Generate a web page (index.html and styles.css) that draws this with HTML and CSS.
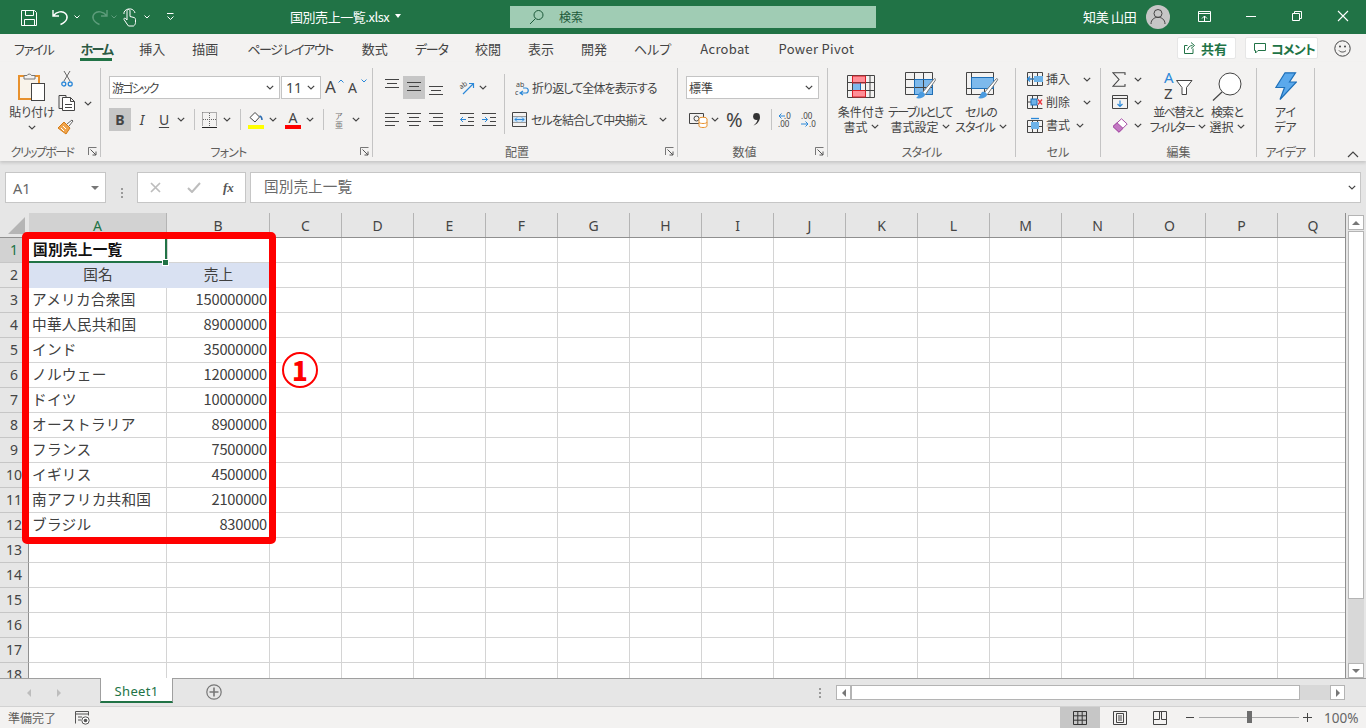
FILE: index.html
```html
<!DOCTYPE html>
<html lang="ja">
<head>
<meta charset="utf-8">
<title>国別売上一覧.xlsx - Excel</title>
<link rel="stylesheet" href="styles.css">
</head>
<body>
<svg class="defs" width="0" height="0" aria-hidden="true">
  <symbol id="chev" viewBox="0 0 8 5"><path d="M.8.8 4 4 7.2.8" fill="none" stroke="#444" stroke-width="1.2"/></symbol>
  <symbol id="launch" viewBox="0 0 9 9"><path d="M.5 8V.5H8.5M1 .5V1" fill="none" stroke="#777"/><path d="M2.5 2.5 8 8M8 4.5V8H4.5" fill="none" stroke="#555"/></symbol>
  <symbol id="al-top" viewBox="0 0 14 17"><path d="M0 .5h14M2 4.500h10M0 8.500h14" stroke="#444"/></symbol>
  <symbol id="al-mid" viewBox="0 0 14 17"><path d="M0 3.500h14M2 7.500h10M0 11.500h14" stroke="#444"/></symbol>
  <symbol id="al-bot" viewBox="0 0 14 17"><path d="M0 7.500h14M2 11.500h10M0 15.500h14" stroke="#444"/></symbol>
  <symbol id="h-left" viewBox="0 0 14 15"><path d="M0 1.500h14M0 5.500h10M0 9.500h14M0 13.500h10" stroke="#444"/></symbol>
  <symbol id="h-center" viewBox="0 0 14 15"><path d="M0 1.500h14M2 5.500h10M0 9.500h14M2 13.500h10" stroke="#444"/></symbol>
  <symbol id="h-right" viewBox="0 0 14 15"><path d="M0 1.500h14M4 5.500h10M0 9.500h14M4 13.500h10" stroke="#444"/></symbol>
</svg>

<header class="titlebar">
  <svg class="qat" width="180" height="34" viewBox="0 0 180 34">
    <g fill="none" stroke="#fff">
      <path d="M21.5 10.5h13l2 2v13h-15zM25.5 10.5v5h8v-5M24.5 25.5v-6h10v6"/>
      <path d="M53 10v6h6M53.5 15.5c3-4 9-5 12-2 3 3 2 8-5 11" stroke-width="1.4"/>
      <path d="M74.500 15.500l2.500 2.500 2.500-2.500"/>
      <g stroke="#5d9c7b"><path d="M107 10v6h-6M106.500 15.500c-3-4-9-5-12-2-3 3-2 8 5 11" stroke-width="1.400"/><path d="M111.500 15.500l2.500 2.500 2.500-2.500"/></g>
      <path d="M127 24l-3-4.500c-.5-1 .8-2 1.600-1l1.400 1.500v-9c0-2 3-2 3 0v5.500l4 1c1 .3 1.500 1 1.500 2v3c0 1.500-1 3-2 3.500h-5z"/>
      <path d="M124 14c-1-5 9-8 11-1"/>
      <path d="M144.500 15.500l2.500 2.500 2.500-2.500"/>
      <path d="M167 13.500h6.500M167.500 16.500l3 3 3-3"/>
    </g>
  </svg>
  <div class="doc"><span>国別売上一覧.xlsx</span><span class="doc-caret"></span></div>
  <div class="search">
    <svg width="16" height="16" viewBox="0 0 16 16"><circle cx="9.500" cy="6" r="4.500" fill="none" stroke="#1d5a3a"/><path d="M6.500 9.500 1 15" stroke="#1d5a3a"/></svg>
    <span>検索</span>
  </div>
  <span class="user">知美 山田</span>
  <span class="avatar"><svg width="24" height="24" viewBox="0 0 24 24"><circle cx="12" cy="8.500" r="4" fill="none" stroke="#444"/><path d="M5 19c0-9 14-9 14 0" fill="none" stroke="#444"/></svg></span>
  <svg class="winctl" width="196" height="34" viewBox="0 0 196 34">
    <g fill="none" stroke="#fff">
      <path d="M28.500 11.500h12v10h-12zM28.500 13.500h12M32 18.500l2.500-2.500 2.500 2.500M34.500 16v5"/>
      <path d="M76 16.500h10"/>
      <path d="M122.500 13.500h7v7h-7zM124.500 13.500v-2h7v7h-2"/>
      <path d="M168 11l10 10M178 11l-10 10" stroke-width="1.100"/>
    </g>
  </svg>
</header>

<nav class="tabs">
  <span class="tab kana">ファイル</span>
  <span class="tab active kana">ホーム</span>
  <span class="tab">挿入</span>
  <span class="tab">描画</span>
  <span class="tab kana wide">ページ レイアウト</span>
  <span class="tab wide">数式</span>
  <span class="tab kana data">データ</span>
  <span class="tab">校閲</span>
  <span class="tab">表示</span>
  <span class="tab">開発</span>
  <span class="tab">ヘルプ</span>
  <span class="tab latin wide">Acrobat</span>
  <span class="tab latin wide">Power Pivot</span>
  <span class="tabs-right">
    <span class="pill pill-share">
      <svg width="12" height="12" viewBox="0 0 12 12"><path d="M9 6.500v5H.5V3.500h3M3.500 8c.5-3 2.500-4.500 5-4.500M7 .5l3.500 3L7 6.500" fill="none" stroke="#217346"/></svg>
      共有
    </span>
    <span class="pill pill-comment">
      <svg width="12" height="12" viewBox="0 0 12 12"><path d="M.5 1.500h11v7H4l-2.500 2.500V8.500h-1z" fill="none" stroke="#217346"/></svg>
      <span class="tight">コメント</span>
    </span>
    <svg class="smile" width="17" height="17" viewBox="0 0 17 17"><circle cx="8.500" cy="8.500" r="7.700" fill="none" stroke="#444"/><circle cx="6" cy="6.500" r="1" fill="#444"/><circle cx="11" cy="6.500" r="1" fill="#444"/><path d="M5 10.500c1.500 2 5.500 2 7 0" fill="none" stroke="#444"/></svg>
  </span>
</nav>

<section class="ribbon">
  <div class="group g-clip">
    <div class="body row-body">
      <div class="big w56">
        <span class="bigicon"><svg width="28" height="31" viewBox="0 0 28 31">
          <rect x="1" y="5" width="20" height="23" fill="#f9f3ea" stroke="#e8912d" stroke-width="2"/>
          <path d="M6 8V4.500h3a2.500 2.500 0 0 1 4.500 0H17V8z" fill="#f3f2f1" stroke="#777"/>
          <rect x="13.500" y="12.500" width="13" height="17" fill="#fff" stroke="#444"/>
        </svg></span>
        <span class="biglabel">貼り付け</span>
        <svg class="chev chev-c"><use href="#chev"/></svg>
      </div>
      <div class="clip-tools">
        <svg class="cut" width="12" height="16" viewBox="0 0 12 16"><path d="M3 10 9 0M9 10 3 0" stroke="#666"/><circle cx="2.800" cy="13" r="2" fill="none" stroke="#2b88d8" stroke-width="1.300"/><circle cx="9.200" cy="13" r="2" fill="none" stroke="#2b88d8" stroke-width="1.300"/></svg>
        <span class="copyrow"><svg width="18" height="16" viewBox="0 0 18 16"><path d="M8 2.500V.5H1v13h3" fill="none" stroke="#444"/><path d="M4.500 2.500h8l4 4v9h-12zM12.500 2.500v4h4M7 9.500h7M7 12.500h7" fill="#fff" stroke="#444"/></svg><svg class="chev ml8"><use href="#chev"/></svg></span>
        <svg width="16" height="16" viewBox="0 0 16 16"><path d="M9 5 14 1l1 1-4 5" fill="#fff" stroke="#666"/><path d="M6 3 12 9 8 15 0 9z" fill="#f0a44b" stroke="#d47a14"/><path d="M3 9l3 3M5 7l3 3" stroke="#fff"/></svg>
      </div>
    </div>
    <div class="glabel launched tighter">クリップボード</div>
    <svg class="launch"><use href="#launch"/></svg>
  </div>

  <div class="group g-font">
    <div class="body">
      <div class="toolrow">
        <span class="select w171"><span class="fontname">游ゴシック</span><svg class="chev"><use href="#chev"/></svg></span>
        <span class="select w40 ml1"><span class="sz">11</span><svg class="chev"><use href="#chev"/></svg></span>
        <span class="fontsize ml4 w16">A<svg class="up" width="6" height="4" viewBox="0 0 6 4"><path d="M.5 3.500 3 1l2.500 2.500" fill="none" stroke="#2b88d8"/></svg></span>
        <span class="fontsize small ml7 w16">A<svg class="up" width="6" height="4" viewBox="0 0 6 4"><path d="M.5.500 3 3l2.500-2.500" fill="none" stroke="#2b88d8"/></svg></span>
      </div>
      <div class="toolrow">
        <span class="btn on b">B</span>
        <span class="btn i">I</span>
        <span class="btn u">U</span>
        <svg class="chev ml2"><use href="#chev"/></svg>
        <span class="sep ml9"></span>
        <svg class="ml7" width="15" height="16" viewBox="0 0 15 16"><path d="M.5.500h14v14M.5.500v14M7.500 1v14M1 7.500h14" fill="none" stroke="#666" stroke-dasharray="1 1"/><path d="M0 15.500h15" stroke="#222"/></svg>
        <svg class="chev ml6"><use href="#chev"/></svg>
        <span class="sep ml9"></span>
        <svg class="ml7" width="16" height="18" viewBox="0 0 16 18"><path d="M2 6.500 7 1.500l4.500 4.500-4.500 5z" fill="#fff" stroke="#444"/><path d="M11.500 5c2 .5 2.500 2 2.500 4" fill="none" stroke="#2b6cb0" stroke-width="1.500"/><rect y="14" width="16" height="4" fill="#ffff00"/></svg>
        <svg class="chev ml5"><use href="#chev"/></svg>
        <span class="colora ml8">A</span>
        <svg class="chev ml5"><use href="#chev"/></svg>
        <span class="sep ml9"></span>
        <span class="ruby ml11"><span>ア</span><span>亜</span></span>
        <svg class="chev ml7"><use href="#chev"/></svg>
      </div>
    </div>
    <div class="glabel launched tight">フォント</div>
    <svg class="launch"><use href="#launch"/></svg>
  </div>

  <div class="group g-align">
    <div class="body">
      <div class="toolrow">
        <svg class="ialign"><use href="#al-top"/></svg>
        <span class="btn on ml4"><svg class="ialign"><use href="#al-mid"/></svg></span>
        <svg class="ialign ml4"><use href="#al-bot"/></svg>
        <svg class="ml16 free" width="16" height="16" viewBox="0 0 16 16"><text x="1" y="8" class="tiny" transform="rotate(-35 4 7)">ab</text><path d="M4 14 14 4M10 3.500h4.500V8" fill="none" stroke="#2b88d8" stroke-width="1.200"/></svg>
        <svg class="chev ml4"><use href="#chev"/></svg>
        <span class="sep tall ml17"></span>
        <svg class="ml10" width="14" height="16" viewBox="0 0 14 16"><text x="1" y="7" class="tiny">ab</text><text x="0" y="15" class="tiny">c</text><path d="M6 13h5c3 0 3-5 0-5H8M8 11l-3 2 3 2" fill="none" stroke="#2b88d8" stroke-width="1.200"/></svg>
        <span class="label ml3">折り返して全体を表示する</span>
      </div>
      <div class="toolrow">
        <svg class="i14"><use href="#h-left"/></svg>
        <svg class="i14 ml8"><use href="#h-center"/></svg>
        <svg class="i14 ml8"><use href="#h-right"/></svg>
        <svg class="ml17" width="14" height="15" viewBox="0 0 14 15"><path d="M0 1.500h14M8 5.500h6M8 9.500h6M0 13.500h14" stroke="#444"/><path d="M6 7.500H.5M3 5l-2.500 2.500L3 10" fill="none" stroke="#2b88d8"/></svg>
        <svg class="ml8" width="14" height="15" viewBox="0 0 14 15"><path d="M0 1.500h14M8 5.500h6M8 9.500h6M0 13.500h14" stroke="#444"/><path d="M0 7.500h5.500M3 5l2.500 2.500L3 10" fill="none" stroke="#2b88d8"/></svg>
        <span class="sep sep-gap ml8"></span>
        <svg class="ml7" width="15" height="15" viewBox="0 0 15 15"><path d="M.5.500h14v14H.5zM1 5h13M1 10h13" fill="none" stroke="#444"/><rect x="1" y="5" width="13" height="5" fill="#cfe4f6"/><path d="M3 7.500h9M5 5.500l-2 2 2 2M10 5.500l2 2-2 2" fill="none" stroke="#2b88d8"/></svg>
        <span class="label ml4">セルを結合して中央揃え</span>
        <svg class="chev ml12"><use href="#chev"/></svg>
      </div>
    </div>
    <div class="glabel launched">配置</div>
    <svg class="launch"><use href="#launch"/></svg>
  </div>

  <div class="group g-num">
    <div class="body">
      <div class="toolrow">
        <span class="select w133"><span>標準</span><svg class="chev"><use href="#chev"/></svg></span>
      </div>
      <div class="toolrow">
        <svg class="ml3" width="19" height="17" viewBox="0 0 19 17"><path d="M.500 2.500h14v10H.500z" fill="none" stroke="#444"/><circle cx="7.500" cy="7.500" r="2.500" fill="none" stroke="#444"/><ellipse cx="14" cy="8" rx="4" ry="1.800" fill="#fff" stroke="#e8912d"/><path d="M10 8v7c0 2 8 2 8 0V8M10 11c0 2 8 2 8 0" fill="#fff" stroke="#e8912d"/></svg>
        <svg class="chev ml3"><use href="#chev"/></svg>
        <span class="pct ml7">%</span>
        <svg class="ml10" width="9" height="13" viewBox="0 0 9 13"><circle cx="4.500" cy="3.500" r="3.400" fill="#333"/><path d="M7.900 3.500C8.200 8 5 11.500 1.500 12.500 4 10.500 5.500 8.500 5.500 6z" fill="#333"/></svg>
        <span class="sep ml10"></span>
        <svg class="ml6" width="18" height="16" viewBox="0 0 18 16"><text x="6" y="7" class="num">.0</text><text x="0" y="15" class="num">.00</text><path d="M7 4H1M3.500 1.500 1 4l2.500 2.500" fill="none" stroke="#2b88d8"/></svg>
        <svg class="ml5" width="17" height="16" viewBox="0 0 17 16"><text x="0" y="7" class="num">.00</text><text x="8" y="15" class="num">.0</text><path d="M0 12h7M4.500 9.500 7 12l-2.500 2.500" fill="none" stroke="#2b88d8"/></svg>
      </div>
    </div>
    <div class="glabel launched">数値</div>
    <svg class="launch"><use href="#launch"/></svg>
  </div>

  <div class="group g-style">
    <div class="body row-body">
      <div class="big w54">
        <span class="bigicon"><svg width="28" height="23" viewBox="0 0 28 23">
          <rect x="5" y="1" width="13" height="7" fill="#ff8f97"/><rect x="5" y="15" width="13" height="7" fill="#ff8f97"/><rect x="5" y="8" width="8" height="7" fill="#7db9ec"/>
          <path d="M.5.500h27v22H.5zM.5 7.500h27M.5 15.500h27M5.500 1v21M18.500 1v21M23 1v21" fill="none" stroke="#444"/>
          <path d="M5.500 1h13v7h-13zM5.500 15.500h13v6.500h-13z" fill="none" stroke="#d81e26"/><path d="M13.500 8v7" stroke="#1d6fb8"/>
        </svg></span>
        <span class="biglabel">条件付き</span>
        <span class="biglabel">書式<svg class="chev ml3"><use href="#chev"/></svg></span>
      </div>
      <div class="big w64">
        <span class="bigicon"><svg width="31" height="28" viewBox="0 0 31 28">
          <rect x="9" y="7" width="19" height="15" fill="#7db9ec"/>
          <path d="M.5.500h27v22H.5zM.5 7.500h27M.5 15.500h27M9.500 1v21M18.500 1v21" fill="none" stroke="#444"/>
          <path d="M9.500 7.500h18v15h-18z" fill="none" stroke="#1d6fb8"/>
          <path d="M17 21 29 7c1-1 2 0 1.500 1L20 23z" fill="#fff" stroke="#777"/><path d="M15 20c3-1 5 1 5 3-1 3-6 4-9 3 2-1 2-4 4-6z" fill="#4a9be0"/>
        </svg></span>
        <span class="biglabel tighter">テーブルとして</span>
        <span class="biglabel">書式設定<svg class="chev ml3"><use href="#chev"/></svg></span>
      </div>
      <div class="big w58">
        <span class="bigicon"><svg class="shift" width="34" height="28" viewBox="0 0 34 28">
          <rect x="5" y="5" width="23" height="11" fill="#7db9ec"/>
          <path d="M.5.500h27v22H.5zM5.500 1v21M.5 16.500h27M18.500 16v6" fill="none" stroke="#444"/>
          <path d="M5.500 5.500h22v11h-22z" fill="none" stroke="#1d6fb8"/>
          <path d="M18 21 30 7c1-1 2 0 1.500 1L21 23z" fill="#fff" stroke="#777"/><path d="M16 20c3-1 5 1 5 3-1 3-6 4-9 3 2-1 2-4 4-6z" fill="#4a9be0"/>
        </svg></span>
        <span class="biglabel tight">セルの</span>
        <span class="biglabel tight">スタイル<svg class="chev ml4"><use href="#chev"/></svg></span>
      </div>
    </div>
    <div class="glabel tight">スタイル</div>
  </div>

  <div class="group g-cell">
    <div class="body stack">
      <span class="cellrow"><svg width="16" height="14" viewBox="0 0 16 14"><path d="M.5.500h15v13H.5zM5.500 1v12M10.500 1v12M1 7h14" fill="none" stroke="#444"/><rect x="7" y="4" width="9" height="6" fill="#6db2e8"/><path d="M0 7h7M3 4.500.5 7 3 9.500" fill="none" stroke="#2b88d8" stroke-width="1.200"/></svg><span class="label w24">挿入</span><svg class="chev ml13"><use href="#chev"/></svg></span>
      <span class="cellrow"><svg width="16" height="14" viewBox="0 0 16 14"><path d="M.500 .500h15M.500 13.500h15M.500 .500v13M5.500 1v3M5.500 10v3M10.500 1v3M10.500 10v3M1 7h3" fill="none" stroke="#444"/><rect x="4" y="4" width="6" height="6" fill="#6db2e8" stroke="#1d6fb8"/><path d="M11 4.500 15 9.500M15 4.500l-4 5" stroke="#e8353e" stroke-width="1.300"/></svg><span class="label w24">削除</span><svg class="chev ml13"><use href="#chev"/></svg></span>
      <span class="cellrow"><svg width="16" height="16" viewBox="0 0 16 16"><path d="M.500 3.500h15v12H.500zM1 9.500h14M5.500 4v11M10.500 4v11" fill="none" stroke="#444"/><rect x="4" y="5" width="8" height="7" fill="#6db2e8"/><path d="M4 1.500h8" stroke="#2b88d8" stroke-width="1.300"/></svg><span class="label w24">書式</span><svg class="chev ml6"><use href="#chev"/></svg></span>
    </div>
    <div class="glabel">セル</div>
  </div>

  <div class="group g-edit">
    <div class="body row-body">
      <div class="stack w37">
        <span class="cellrow"><svg width="14" height="15" viewBox="0 0 14 15"><path d="M13 3V.8H1L7 7.500 1 14.200h12V12" fill="none" stroke="#444" stroke-width="1.100"/></svg><svg class="chev ml8"><use href="#chev"/></svg></span>
        <span class="cellrow"><svg width="16" height="14" viewBox="0 0 16 14"><path d="M.500 .500h15v13H.500zM1 3.500h14" fill="none" stroke="#444"/><path d="M8 5.500v6M5.500 9 8 11.500 10.500 9" fill="none" stroke="#2b88d8" stroke-width="1.200"/></svg><svg class="chev ml6"><use href="#chev"/></svg></span>
        <span class="cellrow"><svg width="16" height="15" viewBox="0 0 16 15"><path d="M9.500.8 15.200 6 7 14.200 1 8.500z" fill="#fff" stroke="#a54da5"/><path d="M1 8.500 5 4.800l6 5.500L7 14.200z" fill="#c278c2" stroke="#a54da5"/></svg><svg class="chev ml6"><use href="#chev"/></svg></span>
      </div>
      <div class="big w58">
        <span class="bigicon"><svg width="30" height="28" viewBox="0 0 30 28"><text x="1" y="11" class="az blue">A</text><text x="1" y="27" class="az">Z</text><path d="M13.500 8.500h15.500L23.500 15.500v7h-4.500v-7z" fill="#fff" stroke="#444"/></svg></span>
        <span class="biglabel tighter">並べ替えと</span>
        <span class="biglabel tighter">フィルター<svg class="chev ml4"><use href="#chev"/></svg></span>
      </div>
      <div class="big w40">
        <span class="bigicon"><svg width="30" height="29" viewBox="0 0 30 29"><circle cx="18" cy="12" r="11" fill="#fff" stroke="#444"/><path d="M10 20 1 28.500" stroke="#444" stroke-width="1.200"/></svg></span>
        <span class="biglabel tight">検索と</span>
        <span class="biglabel">選択<svg class="chev ml3"><use href="#chev"/></svg></span>
      </div>
    </div>
    <div class="glabel">編集</div>
  </div>

  <div class="group g-idea">
    <div class="body row-body">
      <div class="big w57">
        <span class="bigicon"><svg width="22" height="28" viewBox="0 0 22 28"><path d="M10 .8h10.500L14.500 10h7L5 27.500 9.500 15.500H.8z" fill="#5ba9ec" stroke="#1d6fb8" stroke-width="1.200"/></svg></span>
        <span class="biglabel">アイ</span>
        <span class="biglabel">デア</span>
      </div>
    </div>
    <div class="glabel tight">アイデア</div>
  </div>

  <svg class="collapse" width="12" height="7" viewBox="0 0 12 7"><path d="M1 6 6 1l5 5" fill="none" stroke="#444" stroke-width="1.200"/></svg>
</section>

<section class="formula">
  <div class="namebox"><span>A1</span><span class="caret"></span></div>
  <div class="dots"><i></i><i></i><i></i></div>
  <div class="fxbtns">
    <svg width="11" height="11" viewBox="0 0 11 11"><path d="M1 1l9 9M10 1l-9 9" stroke="#bdbdbd" stroke-width="1.700"/></svg>
    <svg width="14" height="11" viewBox="0 0 14 11"><path d="M1 6l4 4 8-9" fill="none" stroke="#bdbdbd" stroke-width="2"/></svg>
    <span class="fx">fx</span>
  </div>
  <div class="fxinput"><span class="fxtext">国別売上一覧</span><svg class="chev"><use href="#chev"/></svg></div>
</section>

<main class="workarea">
  <div class="grid">
    <div class="colhead">
      <span class="corner"><svg width="17" height="17" viewBox="0 0 17 17"><path d="M17 0v17H0z" fill="#b5b5b5"/></svg></span>
      <span class="ch col-a active">A</span>
      <span class="ch col-b">B</span>
      <span class="ch">C</span><span class="ch">D</span><span class="ch">E</span><span class="ch">F</span><span class="ch">G</span><span class="ch">H</span><span class="ch">I</span><span class="ch">J</span><span class="ch">K</span><span class="ch">L</span><span class="ch">M</span><span class="ch">N</span><span class="ch">O</span><span class="ch">P</span><span class="ch last">Q</span>
    </div>
    <div class="row"><span class="rh active">1</span><span class="c col-a title-cell selected">国別売上一覧<i class="handle"></i></span><span class="c col-b"></span><span class="rest"></span></div>
    <div class="row"><span class="rh">2</span><span class="c col-a head">国名</span><span class="c col-b head">売上</span><span class="rest"></span></div>
    <div class="row"><span class="rh">3</span><span class="c col-a">アメリカ合衆国</span><span class="c col-b n">150000000</span><span class="rest"></span></div>
    <div class="row"><span class="rh">4</span><span class="c col-a">中華人民共和国</span><span class="c col-b n">89000000</span><span class="rest"></span></div>
    <div class="row"><span class="rh">5</span><span class="c col-a">インド</span><span class="c col-b n">35000000</span><span class="rest"></span></div>
    <div class="row"><span class="rh">6</span><span class="c col-a">ノルウェー</span><span class="c col-b n">12000000</span><span class="rest"></span></div>
    <div class="row"><span class="rh">7</span><span class="c col-a">ドイツ</span><span class="c col-b n">10000000</span><span class="rest"></span></div>
    <div class="row"><span class="rh">8</span><span class="c col-a">オーストラリア</span><span class="c col-b n">8900000</span><span class="rest"></span></div>
    <div class="row"><span class="rh">9</span><span class="c col-a">フランス</span><span class="c col-b n">7500000</span><span class="rest"></span></div>
    <div class="row"><span class="rh">10</span><span class="c col-a">イギリス</span><span class="c col-b n">4500000</span><span class="rest"></span></div>
    <div class="row"><span class="rh">11</span><span class="c col-a">南アフリカ共和国</span><span class="c col-b n">2100000</span><span class="rest"></span></div>
    <div class="row"><span class="rh">12</span><span class="c col-a">ブラジル</span><span class="c col-b n">830000</span><span class="rest"></span></div>
    <div class="row"><span class="rh">13</span><span class="c col-a"></span><span class="c col-b"></span><span class="rest"></span></div>
    <div class="row"><span class="rh">14</span><span class="c col-a"></span><span class="c col-b"></span><span class="rest"></span></div>
    <div class="row"><span class="rh">15</span><span class="c col-a"></span><span class="c col-b"></span><span class="rest"></span></div>
    <div class="row"><span class="rh">16</span><span class="c col-a"></span><span class="c col-b"></span><span class="rest"></span></div>
    <div class="row"><span class="rh">17</span><span class="c col-a"></span><span class="c col-b"></span><span class="rest"></span></div>
    <div class="row"><span class="rh">18</span><span class="c col-a"></span><span class="c col-b"></span><span class="rest"></span></div>
    <div class="redbox"></div>
    <div class="badge"><span>1</span></div>
  </div>
  <div class="vscroll">
    <span class="sbtn"><i class="tri-up"></i></span>
    <span class="vthumb"></span>
    <span class="vtrack"></span>
    <span class="sbtn"><i class="tri-down"></i></span>
  </div>
</main>

<section class="sheetbar">
  <span class="nav"><i class="tri-l"></i><i class="tri-r"></i></span>
  <span class="sheet-tab">Sheet1</span>
  <svg class="add" width="16" height="16" viewBox="0 0 16 16"><circle cx="8" cy="8" r="7.200" fill="none" stroke="#777" stroke-width="1.200"/><path d="M8 3.500v9M3.500 8h9" stroke="#777" stroke-width="1.600"/></svg>
  <div class="dots sb-dots"><i></i><i></i><i></i></div>
  <div class="hscroll">
    <span class="hbtn"><i class="tri-l dark"></i></span>
    <span class="hthumb"></span>
    <span class="htrack"></span>
    <span class="hbtn end"><i class="tri-r dark"></i></span>
  </div>
</section>

<footer class="status">
  <span class="ready">準備完了</span>
  <svg class="macro" width="15" height="14" viewBox="0 0 15 14"><path d="M.5 12.500V.5h13v4M1 3h12M3 6h4M3 9h3" fill="none" stroke="#555"/><circle cx="10.500" cy="9.500" r="3.700" fill="#fff" stroke="#555"/><circle cx="10.500" cy="9.500" r="1.800" fill="#555"/></svg>
  <span class="view on"><svg width="14" height="14" viewBox="0 0 14 14"><path d="M.5.500h13v13H.5zM4.800 1v12M9.200 1v12M1 4.800h12M1 9.200h12" fill="none" stroke="#333"/></svg></span>
  <span class="view v2"><svg width="14" height="14" viewBox="0 0 14 14"><path d="M.5.500h13v13H.5z M3.500 2.500h7v9h-7zM5 5h4M5 7h4M5 9h4" fill="none" stroke="#444"/></svg></span>
  <span class="view v3"><svg width="14" height="14" viewBox="0 0 14 14"><path d="M.5.500h13v13H.5zM.5 8.500h6v-8M8.500 1v7.500h5" fill="none" stroke="#444"/></svg></span>
  <span class="zoom-minus"></span>
  <span class="slider"><i></i></span>
  <span class="zoom-plus"></span>
  <span class="pct-label">100%</span>
</footer>
</body>
</html>
```
FILE: styles.css
```css
*{box-sizing:border-box}
html,body{margin:0;padding:0}
body{width:1366px;height:728px;overflow:hidden;display:flex;flex-direction:column;background:#e6e6e6;color:#444;font-family:"Noto Sans CJK JP","Noto Sans",sans-serif;font-size:12px}
svg{display:block;flex:none}
svg.free{overflow:visible}
.defs{position:absolute}
.ml1{margin-left:1px}.ml2{margin-left:2px}.ml3{margin-left:3px}.ml4{margin-left:4px}.ml5{margin-left:5px}.ml6{margin-left:6px}.ml7{margin-left:7px}.ml8{margin-left:8px}.ml9{margin-left:9px}.ml10{margin-left:10px}.ml11{margin-left:11px}.ml12{margin-left:12px}.ml13{margin-left:13px}.ml16{margin-left:16px}.ml17{margin-left:17px}
.tight{letter-spacing:-.8px}
.tighter{letter-spacing:-1.6px}

.titlebar{height:34px;flex:none;background:#217346;display:flex;align-items:center;color:#fff}
.doc{width:220px;margin-left:110px;display:flex;align-items:center;font-size:13px;letter-spacing:-.45px;padding-bottom:2px}
.doc-caret{margin-left:6px;border-top:4px solid #fff;border-left:3px solid transparent;border-right:3px solid transparent}
.search{width:366px;height:22px;background:#a0ccb4;display:flex;align-items:center;padding-left:19px;color:#1d5a3a;gap:14px;font-size:12px}
.search span{margin-top:-2px}
.user{margin-left:207px;width:52px;font-size:13px;white-space:nowrap;letter-spacing:-.3px;padding-bottom:2px}
.avatar{margin-left:11px;width:24px;height:24px;border-radius:50%;background:#c6c6c6}

.tabs{height:28px;flex:none;background:#f3f2f1;display:flex;align-items:center;padding-left:14px;gap:27px;font-size:13px;font-feature-settings:"palt";color:#444}
.tab{position:relative;white-space:nowrap;line-height:28px;padding-top:2px}
.tab.kana{letter-spacing:-1.4px}
.tab.latin{letter-spacing:.3px}
.tab.wide{margin-left:2px}
.tab.active{font-weight:700;color:#2c5a44;letter-spacing:-1.75px}
.tab.data{letter-spacing:-1.1px}
.tab.active::after{content:"";position:absolute;left:0;right:0;top:25px;height:3px;background:#217346}
.tabs-right{margin-left:auto;display:flex;align-items:center;gap:9px;padding-right:15px}
.pill{height:22px;background:#fff;border:1px solid #e6e6e6;border-radius:2px;color:#217346;font-weight:700;display:flex;align-items:center;gap:5px;font-size:13px;white-space:nowrap}
.pill-share{width:59px;padding-left:6px}
.pill-comment{width:73px;padding-left:8px}
.smile{margin-left:7px}

.ribbon{height:99px;flex:none;background:#f3f2f1;display:flex;padding-top:6px;align-items:flex-start;position:relative;box-shadow:0 2px 3px rgba(0,0,0,.14);font-feature-settings:"palt";z-index:1}
.group{height:89px;display:flex;flex-direction:column;border-right:1px solid #c4c4c4;position:relative;flex:none}
.body{flex:1;min-height:0}
.row-body{display:flex}
.glabel{height:14px;line-height:14px;text-align:center;color:#605e5c;font-size:12px;transform:translateY(2px);white-space:nowrap}
.glabel.launched{padding-right:16px}
.launch{position:absolute;right:3px;bottom:1px;width:9px;height:9px}
.g-clip{width:101px;padding-left:4px}
.g-clip .glabel{margin-left:-4px}
.g-font{width:272px}
.g-align{width:305px}
.g-num{width:150px}
.g-style{width:188px}
.g-cell{width:85px}
.g-edit{width:156px}
.g-idea{width:58px}
.g-font .body{padding:8px 0 0 8px}
.g-align .body{padding:8px 0 0 12px}
.g-num .body{padding:8px 0 0 8px}
.g-style .body{padding-left:6px}
.g-cell .body{padding-left:11px}
.g-edit .body{padding-left:11px}
.toolrow{height:23px;display:flex;align-items:center;margin-bottom:9px;white-space:nowrap}
.chev{width:8px;height:5px;flex:none}
.sep{width:1px;height:21px;background:#c4c4c4;flex:none}
.sep.tall{height:60px;align-self:flex-start;margin-top:-2px}
.sep-gap{visibility:hidden}
.i14{width:14px;height:15px}
.ialign{width:14px;height:17px}
.select{height:23px;background:#fff;border:1px solid #c4c4c4;display:flex;align-items:center;justify-content:space-between;padding:0 5px 0 2px;color:#444;flex:none}
.w171{width:171px}.w40{width:40px}.w133{width:133px}.w16{width:16px}.w24{width:24px}
.fontname{letter-spacing:-1.8px}
.sz{font-size:14px;font-family:"Noto Sans",sans-serif;padding-left:2px}
.fontsize{position:relative;font-size:17px;line-height:1;height:19px;font-family:"Noto Sans",sans-serif}
.fontsize.small{font-size:14px;padding-top:3px}
.up{position:absolute;right:-3px;top:1px}
.btn{width:22px;height:23px;display:flex;align-items:center;justify-content:center;flex:none;font-size:14px;font-family:"Noto Sans",sans-serif}
.btn.on{background:#c6c6c6}
.btn.b{font-weight:700}
.btn.i{font-style:italic}
.btn.u{text-decoration:underline;text-underline-offset:2px}
.colora{width:16px;text-align:center;font-size:14px;line-height:15px;border-bottom:4px solid #f00;font-family:"Noto Sans",sans-serif;flex:none}
.ruby{width:10px;display:flex;flex-direction:column;font-size:8px;line-height:9px;color:#777;flex:none}
.label{white-space:nowrap;line-height:16px;letter-spacing:-.9px}
.cellrow .label{letter-spacing:0}
.tiny{font:7px "Noto Sans",sans-serif;fill:#444}
.num{font:8px "Noto Sans",sans-serif;fill:#444}
.az{font:15px "Noto Sans",sans-serif;fill:#444}
.az.blue{fill:#2b88d8}
.pct{font-size:20px;line-height:20px;font-family:"Noto Sans",sans-serif;width:16px;flex:none;text-align:center}
.big{display:flex;flex-direction:column;align-items:center;flex:none}
.w54{width:54px}.w56{width:56px}.w57{width:57px}.w58{width:58px}.w64{width:64px}.w37{width:37px}
.bigicon{height:36px;display:flex;align-items:center;justify-content:center}
.biglabel{display:flex;align-items:center;height:15px;line-height:15px;white-space:nowrap}
.chev-c{margin-top:6px}
.shift{transform:translateX(2px)}
.clip-tools{display:flex;flex-direction:column;padding-top:3px;gap:8px;margin-left:-2px}
.cut{margin-left:3px}
.copyrow{display:flex;align-items:center}
.stack{display:flex;flex-direction:column;gap:1px}
.cellrow{height:22px;display:flex;align-items:center;white-space:nowrap}
.cellrow .label{margin-left:3px}
.collapse{position:absolute;right:7px;bottom:3px}

.formula{height:52px;flex:none;padding:11px 5px 0;display:flex;align-items:flex-start;background:#e6e6e6}
.namebox,.fxbtns,.fxinput{height:31px;background:#fff;border:1px solid #c6c6c6;display:flex;align-items:center;flex:none}
.namebox{width:101px;padding:0 6px 0 7px;justify-content:space-between;font-size:14.5px;color:#666;font-family:"Noto Sans",sans-serif}
.caret{border-top:4px solid #777;border-left:4px solid transparent;border-right:4px solid transparent}
.dots{display:flex;flex-direction:column;gap:2px;width:31px;align-items:center;align-self:center}
.dots i{width:2px;height:2px;background:#9a9a9a}
.fxbtns{width:109px;padding-left:12px}
.fxbtns svg:nth-child(2){margin-left:26px}
.fx{margin-left:22px;font:italic 700 13px "Liberation Serif",serif;color:#555}
.fxinput{width:1111px;margin-left:4px;padding:0 4px 0 13px;justify-content:space-between;font-size:14.6px;color:#6a6a6a}
.fxtext{margin-top:-4px;letter-spacing:.1px}

.workarea{height:465px;flex:none;display:flex}
.grid{width:1346px;background:#fff;border-right:1px solid #8f8f8f;overflow:hidden;position:relative;font-size:14.67px}
.colhead{height:25px;display:flex;background:#e6e6e6;border-bottom:1px solid #8f8f8f;color:#444}
.corner{width:29px;display:flex;align-items:flex-end;padding:0 0 3px 8px;flex:none}
.ch{width:72px;flex:none;text-align:center;line-height:26px;border-right:1px solid #b4b4b4;font-family:"Noto Sans",sans-serif;font-size:14px}
.ch.col-a{width:138px}
.ch.col-b{width:103px}
.ch.active{background:#d2d2d2;color:#217346}
.ch.last{border-right:0;width:68px;padding-left:2px}
.row{height:25px;display:flex;border-bottom:1px solid #d4d4d4}
.rh{width:29px;flex:none;background:#e6e6e6;border-right:1px solid #8f8f8f;margin-bottom:-1px;text-align:center;line-height:23px;color:#444;font-family:"Noto Sans",sans-serif;font-size:14px;border-bottom:1px solid #c6c6c6}
.rh.active{background:#d2d2d2;color:#217346}
.c{flex:none;border-right:1px solid #d4d4d4;line-height:22px;padding:0 2px 0 3px;white-space:nowrap;position:relative;margin-bottom:-1px;color:#404040}
.col-a{width:138px;letter-spacing:.25px}
.col-b{width:103px}
.n{text-align:right;letter-spacing:-.2px}
.head{background:#d9e1f2;text-align:center;border-right-color:#d9e1f2;letter-spacing:0}
.title-cell{font-weight:700;font-size:14.67px;color:#111;padding-left:4px}
.selected{width:139px;margin-right:-1px;z-index:1;box-shadow:inset -2px -2px 0 #217346}
.handle{position:absolute;right:-1px;bottom:-2px;width:5px;height:5px;background:#217346;outline:1px solid #fff}
.rest{flex:1;background:repeating-linear-gradient(to right,transparent 0 71px,#d4d4d4 71px 72px);margin-bottom:-1px;border-bottom:1px solid #d4d4d4}
.redbox{position:absolute;left:22px;top:19px;width:254px;height:312px;border:7px solid #f00;border-radius:5px;z-index:2}
.badge{position:absolute;left:282px;top:139px;width:36px;height:36px;border-radius:50%;background:#fff;border:2px solid #f00;box-shadow:0 0 0 1.5px #fff,0 0 3px 2px rgba(255,255,255,.9);display:flex;align-items:center;justify-content:center;color:#f00;font:900 26px/1 "Noto Sans CJK JP",sans-serif}

.vscroll{width:20px;flex:none;display:flex;flex-direction:column;padding:2px 2px 0}
.sbtn{height:15px;background:#fff;border:1px solid #b4b4b4;display:flex;align-items:center;justify-content:center;flex:none}
.vthumb{height:368px;margin-top:1px;background:#fff;border:1px solid #b4b4b4;flex:none}
.vtrack{flex:1;background:#d8d8d8}
.tri-up{border-bottom:4px solid #777;border-left:4px solid transparent;border-right:4px solid transparent}
.tri-down{border-top:4px solid #777;border-left:4px solid transparent;border-right:4px solid transparent}

.sheetbar{height:28px;flex:none;background:#e6e6e6;border-top:1px solid #9f9f9f;display:flex;position:relative}
.nav{width:100px;display:flex;gap:26px;padding:10px 0 0 27px;flex:none}
.tri-l{width:0;height:0;border-right:4px solid #bdbdbd;border-top:4px solid transparent;border-bottom:4px solid transparent}
.tri-r{width:0;height:0;border-left:4px solid #bdbdbd;border-top:4px solid transparent;border-bottom:4px solid transparent}
.tri-l.dark{border-right-color:#777}
.tri-r.dark{border-left-color:#777}
.sheet-tab{width:73px;height:25px;margin-top:-1px;background:#fff;border:1px solid #9f9f9f;border-top:0;border-bottom:2px solid #217346;color:#217346;text-align:center;line-height:26px;font-size:13px;letter-spacing:.3px;font-family:"Noto Sans",sans-serif;flex:none}
.add{margin:5px 0 0 33px}
.sb-dots{width:32px;margin-left:582px;align-self:center}
.hscroll{margin-top:6px;width:509px;height:15px;display:flex;flex:none}
.hbtn{width:15px;height:15px;background:#fff;border:1px solid #b4b4b4;display:flex;align-items:center;justify-content:center;flex:none}
.hthumb{width:449px;background:#fff;border:1px solid #b4b4b4;flex:none}
.htrack{flex:1;background:#d8d8d8}

.status{height:22px;flex:none;background:#f3f2f1;border-top:1px solid #d2d2d2;display:flex;align-items:center;color:#605e5c;position:relative}
.ready{margin-left:8px;width:48px;white-space:nowrap;font-size:12px}
.macro{margin-left:19px}
.view{width:40px;height:21px;display:flex;align-items:center;justify-content:center;flex:none}
.view.on{margin-left:970px;background:#c6c6c6}
.zoom-minus{width:8px;height:1px;background:#444;margin-left:6px;flex:none}
.slider{width:100px;height:1px;background:#a8a8a8;margin-left:5px;position:relative;flex:none}
.slider i{position:absolute;left:48px;top:-6px;width:5px;height:12px;background:#6e6e6e}
.zoom-plus{width:9px;height:9px;margin-left:4px;flex:none;background:linear-gradient(#444,#444) center/9px 1px no-repeat,linear-gradient(#444,#444) center/1px 9px no-repeat}
.pct-label{margin-left:12px;font-size:13.5px;font-family:"Noto Sans",sans-serif;color:#666}
```
